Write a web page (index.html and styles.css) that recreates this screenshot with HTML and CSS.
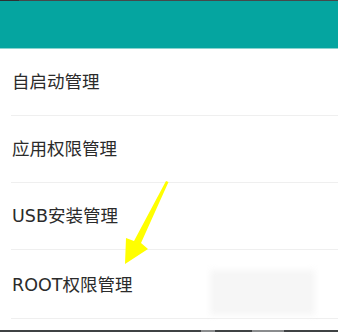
FILE: index.html
```html
<!DOCTYPE html>
<html lang="zh-CN">
<head>
  <meta charset="UTF-8">
  <meta name="viewport" content="width=device-width, initial-scale=1.0">
  <title>权限管理</title>
  <link rel="stylesheet" href="styles.css">
</head>
<body>
  <div class="page">
    <div class="status"></div>
    <div class="header"></div>
    <ul class="menu">
      <li>自启动管理</li>
      <li>应用权限管理</li>
      <li>USB安装管理</li>
      <li class="last">ROOT权限管理</li>
    </ul>
    <div class="navbar">
      <span class="key k1"></span>
      <span class="key k2"></span>
    </div>

    <div class="smudge"></div>
    <svg class="arrow" width="338" height="332" viewBox="0 0 338 332">
      <polygon points="166,181 168.5,182 141,243 148,249 125,264 126,238 134,241" fill="#ffff00"/>
    </svg>
  </div>
</body>
</html>
```

FILE: styles.css
```css
*{padding:0;margin:0}
body{
  background:#fff;
  font-family:"DejaVu Sans","Noto Sans CJK SC",sans-serif;
}
.page{
  width:338px;
  height:332px;
  position:relative;
  display:flex;
  flex-direction:column;
  overflow:hidden;
}
.status{
  height:1px;
  background:linear-gradient(to right,#2e3133 19px,#45494b 19px);
}
.header{
  height:47px;
  background:#05a5a0;
  border-bottom:1px solid #8ad3cf;
}
.menu{
  list-style:none;
}
.menu li{
  height:66px;
  line-height:66px;
  margin-left:11px;
  padding-left:1px;
  font-size:17.5px;
  color:#2b2b2b;
  border-bottom:1px solid #efefef;
}
.menu li.last{
  height:68px;
  line-height:70px;
}
.navbar{
  margin-top:auto;
  height:2px;
  background:#3f4244;
  position:relative;
}
.key{
  position:absolute;
  top:0;
  height:2px;
  background:#8a8c8e;
}
.k1{left:201px;width:14px}
.k2{left:252px;width:32px}
.smudge{
  position:absolute;
  left:210px;
  top:270px;
  width:105px;
  height:45px;
  background:#f6f6f6;
  filter:blur(3px);
}
.arrow{
  position:absolute;
  left:0;
  top:0;
}
```
